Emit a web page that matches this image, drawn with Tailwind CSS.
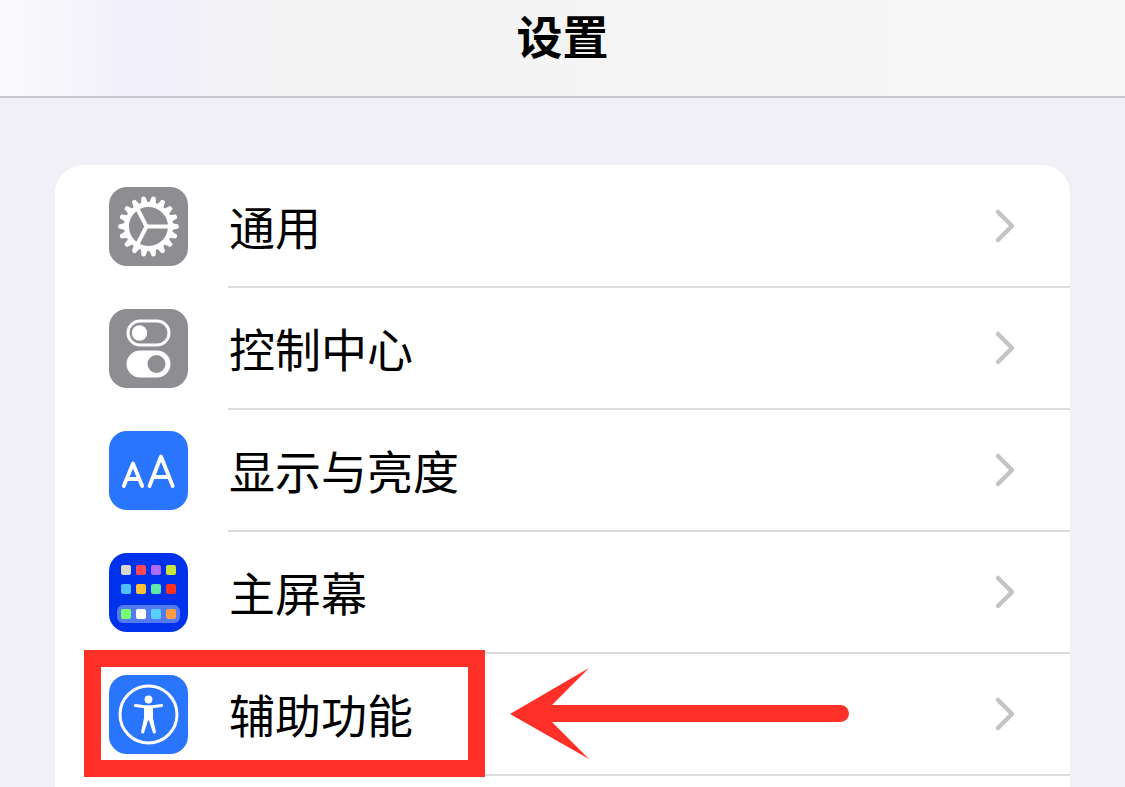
<!DOCTYPE html>
<html lang="zh-CN">
  <head>
    <meta charset="UTF-8" />
    <meta name="viewport" content="width=device-width, initial-scale=1.0" />
    <title>设置</title>
    <script src="https://cdn.jsdelivr.net/npm/@tailwindcss/browser@4"></script>
  </head>
  <body class="flex min-h-screen flex-col overflow-hidden bg-[#f1f0f6] font-['Noto_Sans_CJK_SC',sans-serif] text-black">
    <header class="flex h-[98px] items-start justify-center border-b-2 border-[#c9c8ce] bg-[linear-gradient(to_right,#fbfbfd,#f6f6fb_5%,#f0effb_13%,#f3f3f6_20%,#f3f3f3_30%,#f7f7f7)] pt-1">
      <h1 class="text-[46px] leading-[60px] font-bold">设置</h1>
    </header>

    <main class="flex flex-1 flex-col px-[55px] pt-[67px]">
      <nav class="flex-1 rounded-t-[28px] bg-white pt-px">
        <ul>
          <li>
            <a href="#general" class="flex h-[122px] items-center pl-[54px]">
              <svg class="mb-px size-[79px] shrink-0" viewBox="0 0 79 79" fill="none" aria-hidden="true">
                <defs>
                  <path id="tooth" d="M62 35.800L69.200 37.500Q70.500 39.500 69.200 41.500L62 43.200Z" />
                  <g id="teeth">
                    <use href="#tooth" />
                    <use href="#tooth" transform="rotate(20 39.5 39.5)" />
                    <use href="#tooth" transform="rotate(40 39.5 39.5)" />
                    <use href="#tooth" transform="rotate(60 39.5 39.5)" />
                    <use href="#tooth" transform="rotate(80 39.5 39.5)" />
                    <use href="#tooth" transform="rotate(100 39.5 39.5)" />
                  </g>
                </defs>
                <rect width="79" height="79" rx="18" fill="#8e8d92" />
                <g fill="#fff">
                  <use href="#teeth" />
                  <use href="#teeth" transform="rotate(120 39.5 39.5)" />
                  <use href="#teeth" transform="rotate(240 39.5 39.5)" />
                </g>
                <circle cx="39.5" cy="39.5" r="22" stroke="#fff" stroke-width="5" />
                <path d="M37.500 39.500H61M37.500 39.500L28.500 22M37.500 39.500L28.500 57" stroke="#fff" stroke-width="4" stroke-linejoin="round" />
              </svg>
              <span class="ml-10 flex h-full flex-1 items-center justify-between border-b-2 border-[#dcdcde] pr-[54px]">
                <span class="mb-0.5 pl-px text-[46px] leading-[60px]">通用</span>
                <svg class="h-9 w-[22px]" viewBox="0 0 22 36" fill="none" aria-hidden="true"><path d="M4 4L18 18L4 32" stroke="#c4c4c6" stroke-width="4.5" stroke-linecap="round" stroke-linejoin="round" /></svg>
              </span>
            </a>
          </li>
          <li>
            <a href="#control-center" class="flex h-[122px] items-center pl-[54px]">
              <svg class="mb-px size-[79px] shrink-0" viewBox="0 0 79 79" fill="none" aria-hidden="true">
                <rect width="79" height="79" rx="18" fill="#8e8d92" />
                <rect x="19" y="12" width="41" height="24" rx="12" stroke="#fff" stroke-width="3" />
                <circle cx="30.5" cy="24" r="7.7" fill="#fff" />
                <rect x="17.5" y="41.5" width="44" height="27" rx="13.5" fill="#fff" />
                <circle cx="47.5" cy="55" r="9" fill="#8e8d92" />
              </svg>
              <span class="ml-10 flex h-full flex-1 items-center justify-between border-b-2 border-[#dcdcde] pr-[54px]">
                <span class="mb-0.5 pl-px text-[46px] leading-[60px]">控制中心</span>
                <svg class="h-9 w-[22px]" viewBox="0 0 22 36" fill="none" aria-hidden="true"><path d="M4 4L18 18L4 32" stroke="#c4c4c6" stroke-width="4.5" stroke-linecap="round" stroke-linejoin="round" /></svg>
              </span>
            </a>
          </li>
          <li>
            <a href="#display" class="flex h-[122px] items-center pl-[54px]">
              <svg class="mb-px size-[79px] shrink-0" viewBox="0 0 79 79" fill="none" aria-hidden="true">
                <rect width="79" height="79" rx="18" fill="#2a75fe" />
                <path d="M14.8 55L24 32.5L33.2 55M18 48H30M40.5 55L52 25.5L63.7 55M44.5 46H59.5" stroke="#fff" stroke-width="3.8" stroke-linecap="round" stroke-linejoin="round" />
              </svg>
              <span class="ml-10 flex h-full flex-1 items-center justify-between border-b-2 border-[#dcdcde] pr-[54px]">
                <span class="mb-0.5 pl-px text-[46px] leading-[60px]">显示与亮度</span>
                <svg class="h-9 w-[22px]" viewBox="0 0 22 36" fill="none" aria-hidden="true"><path d="M4 4L18 18L4 32" stroke="#c4c4c6" stroke-width="4.5" stroke-linecap="round" stroke-linejoin="round" /></svg>
              </span>
            </a>
          </li>
          <li>
            <a href="#home-screen" class="flex h-[122px] items-center pl-[54px]">
              <svg class="mb-px size-[79px] shrink-0" viewBox="0 0 79 79" fill="none" aria-hidden="true">
                <rect width="79" height="79" rx="18" fill="#0032ec" />
                <rect x="8" y="52" width="63" height="18" rx="6" fill="#527bf3" />
                <rect x="12" y="12" width="10" height="10" rx="2" fill="#d9d7cf" />
                <rect x="27" y="12" width="10" height="10" rx="2" fill="#ff4858" />
                <rect x="42" y="12" width="10" height="10" rx="2" fill="#ad6cff" />
                <rect x="57" y="12" width="10" height="10" rx="2" fill="#c9e63c" />
                <rect x="12" y="31" width="10" height="10" rx="2" fill="#4fc0ff" />
                <rect x="27" y="31" width="10" height="10" rx="2" fill="#ffc136" />
                <rect x="42" y="31" width="10" height="10" rx="2" fill="#5fe8a8" />
                <rect x="57" y="31" width="10" height="10" rx="2" fill="#ff3222" />
                <rect x="12" y="56" width="10" height="10" rx="2" fill="#76ff70" />
                <rect x="27" y="56" width="10" height="10" rx="2" fill="#fff" />
                <rect x="42" y="56" width="10" height="10" rx="2" fill="#58d0ff" />
                <rect x="57" y="56" width="10" height="10" rx="2" fill="#ff9c44" />
              </svg>
              <span class="ml-10 flex h-full flex-1 items-center justify-between border-b-2 border-[#dcdcde] pr-[54px]">
                <span class="mb-0.5 pl-px text-[46px] leading-[60px]">主屏幕</span>
                <svg class="h-9 w-[22px]" viewBox="0 0 22 36" fill="none" aria-hidden="true"><path d="M4 4L18 18L4 32" stroke="#c4c4c6" stroke-width="4.5" stroke-linecap="round" stroke-linejoin="round" /></svg>
              </span>
            </a>
          </li>
          <li class="relative">
            <a href="#accessibility" class="flex h-[122px] items-center pl-[54px]">
              <svg class="mb-px size-[79px] shrink-0" viewBox="0 0 79 79" fill="none" aria-hidden="true">
                <rect width="79" height="79" rx="18" fill="#2a75fe" />
                <circle cx="39.5" cy="39.5" r="28.5" stroke="#fff" stroke-width="3" />
                <circle cx="39.5" cy="24.5" r="3.9" fill="#fff" />
                <path d="M26.4 30.4L35.5 31.8H43.5L52.6 30.4" stroke="#fff" stroke-width="3" stroke-linecap="round" stroke-linejoin="round" />
                <path d="M35 31H44V43L47 57.2Q46 59.5 44 58L40 45.5H39L35 58Q33 59.5 32 57.2L35 43Z" fill="#fff" />
              </svg>
              <span class="ml-10 flex h-full flex-1 items-center justify-between border-b-2 border-[#dcdcde] pr-[54px]">
                <span class="mb-0.5 pl-px text-[46px] leading-[60px]">辅助功能</span>
                <svg class="h-9 w-[22px]" viewBox="0 0 22 36" fill="none" aria-hidden="true"><path d="M4 4L18 18L4 32" stroke="#c4c4c6" stroke-width="4.5" stroke-linecap="round" stroke-linejoin="round" /></svg>
              </span>
            </a>
            <!-- highlight box and arrow -->
            <div class="pointer-events-none absolute -top-1 left-[29px] h-[127px] w-[401px] border-[17px] border-[#ff3028]"></div>
            <svg class="pointer-events-none absolute top-[14px] left-[455px] h-[92px] w-[340px]" viewBox="0 0 340 92" aria-hidden="true">
              <path d="M0 46L79 0L42 37H330.500A8.500 8.500 0 0 1 330.500 54H42L79 91Z" fill="#ff3028" />
            </svg>
          </li>
        </ul>
      </nav>
    </main>
  </body>
</html>
